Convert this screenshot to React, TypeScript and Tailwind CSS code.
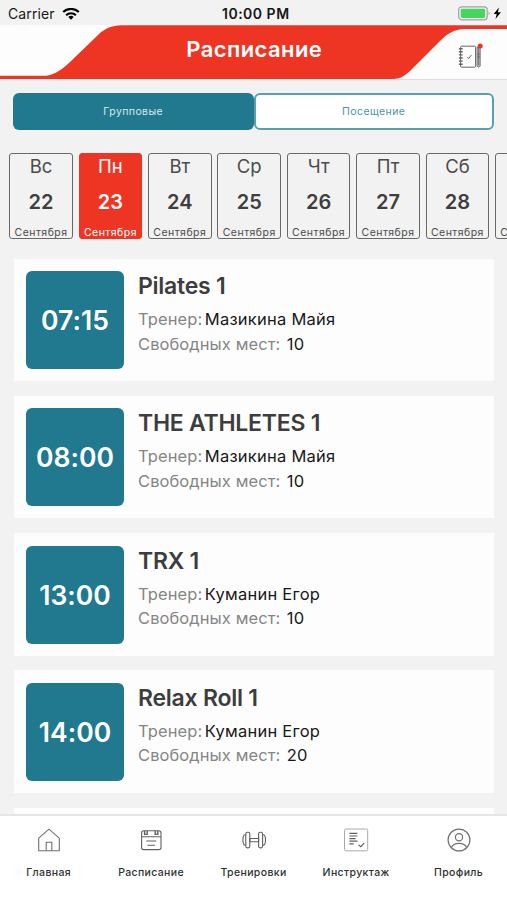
import React from 'react';

const days = [
  { day: 'Вс', date: 22 },
  { day: 'Пн', date: 23, active: true },
  { day: 'Вт', date: 24 },
  { day: 'Ср', date: 25 },
  { day: 'Чт', date: 26 },
  { day: 'Пт', date: 27 },
  { day: 'Сб', date: 28 },
  { day: '', date: 29 },
];

const classes = [
  { time: '07:15', name: 'Pilates 1', trainer: 'Мазикина Майя', places: 10 },
  { time: '08:00', name: 'THE ATHLETES 1', trainer: 'Мазикина Майя', places: 10 },
  { time: '13:00', name: 'TRX 1', trainer: 'Куманин Егор', places: 10 },
  { time: '14:00', name: 'Relax Roll 1', trainer: 'Куманин Егор', places: 20 },
];

function StatusBar() {
  return (
    <div className="relative flex h-[25px] shrink-0 items-center justify-between pt-[3px] pr-[5px] pl-[8px] text-[#171717]">
      <div className="flex items-center gap-[7px]">
        <span className="text-[14px] leading-[20px] tracking-[0.1px]">Carrier</span>
        <svg width="18" height="13" viewBox="0 0 18 13" fill="none" stroke="#000" strokeWidth="2.2">
          <path d="M1.2 4C5.6-.1 12.4-.1 16.8 4" />
          <path d="M4.1 7.2c2.8-2.6 7-2.6 9.8 0" />
          <path d="M9 11.8 6.3 9.1a3.9 3.9 0 0 1 5.4 0Z" fill="#000" stroke="none" />
        </svg>
      </div>
      <span className="absolute left-[222px] text-[14px] leading-[20px] font-semibold tracking-[0.5px]">10:00 PM</span>
      <svg width="44" height="16" viewBox="0 0 44 16">
        <rect x="0.7" y="0.8" width="28.5" height="13" rx="3" fill="#f4f4f4" stroke="#a0a0a0" strokeWidth="1.2" />
        <rect x="2.7" y="2.7" width="24.5" height="9.2" rx="1.3" fill="#45d75d" />
        <path d="M30.6 5.4c1.3.8 1.3 3 0 3.8Z" fill="#999" />
        <path d="M40.9 1.6 35.7 8h3l-1.2 4.9 5.4-6.7h-3Z" fill="#000" />
      </svg>
    </div>
  );
}

function JournalIcon() {
  return (
    <svg width="26" height="27" viewBox="0 0 26 27" fill="none" stroke="#666" strokeWidth="1">
      <rect x="3.6" y="4.2" width="15" height="21" rx="1" />
      <path d="M1.9 6.7h3.8M1.9 9.8h3.8M1.9 12.9h3.8M1.9 16h3.8M1.9 19.1h3.8M1.9 22.2h3.8" strokeWidth="1.4" />
      <path d="m10.4 15.1 1.2 1.5 2.8-3.6" />
      <path d="M20 5h3.2v19.2l-1.6 1-1.6-1ZM20 12h3.2M20 15h3.2M21.6 5v18" fill="#bbb" strokeWidth="0.8" />
      <circle cx="23.2" cy="4" r="2.5" fill="#ee3524" stroke="none" />
    </svg>
  );
}

function Header() {
  return (
    <header className="relative flex h-[55px] shrink-0 items-center justify-center">
      <svg className="absolute inset-0" width="507" height="55" viewBox="0 0 507 55">
        <rect width="507" height="54" fill="#fdfdfd" />
        <path
          d="M0 50.7H46C54 50 63 44 70 37L98 10C104 4 112 .3 121 .3H507V4H465C454 4 447 9 439 17L412 44C406 50 401 54 393 54H0Z"
          fill="#ee3524"
        />
        <path d="M393 54.5h114" stroke="#dedede" />
      </svg>
      <h1 className="relative -mt-[8px] pl-[1.5px] text-[22px] leading-[28px] font-semibold tracking-[0.4px] text-white">Расписание</h1>
      <div className="absolute top-[17px] left-[457px]">
        <JournalIcon />
      </div>
    </header>
  );
}

function DayCard({ day, date, active }: { day: string; date: number; active?: boolean }) {
  return (
    <div
      className={
        active
          ? 'flex h-[86px] w-[63.5px] shrink-0 flex-col items-center rounded-[3px] border border-[#ee3524] bg-[#ee3524] text-white'
          : 'flex h-[86px] w-[63.5px] shrink-0 flex-col items-center rounded-[3px] border border-[#686868] text-[#4b4b4b]'
      }
    >
      <span className="h-[24px] shrink-0 text-[18.5px] leading-[24px]">{day}</span>
      <span className={active ? 'mt-[12px] h-[24px] shrink-0 text-[20px] leading-[24px] font-semibold text-white' : 'mt-[12px] h-[24px] shrink-0 text-[20px] leading-[24px] font-semibold text-[#3e3e3e]'}>{day && date}</span>
      <span className="mt-[12px] h-[12px] shrink-0 text-[10.5px] leading-[14px] tracking-[0.48px]">Сентября</span>
    </div>
  );
}

function ClassCard({ time, name, trainer, places }: { time: string; name: string; trainer: string; places: number }) {
  return (
    <article className="flex h-[122.5px] shrink-0 bg-[#fdfdfd] pt-[12.5px] pl-[12px]">
      <div className="flex size-[98px] items-center justify-center rounded-[6px] bg-[#20798f] pt-[2px] text-[26.5px] font-semibold tracking-[0.05px] text-white">{time}</div>
      <div className="ml-[14px] whitespace-nowrap">
        <h2 className="text-[23px] leading-[30px] font-semibold tracking-[-0.25px] text-[#3d3d3d]">{name}</h2>
        <p className="mt-[6px] text-[16.5px] leading-[24.5px] tracking-[0.08px] text-[#858585]">
          Тренер:<span className="ml-[2.5px] tracking-[0.25px] text-[#181818]">{trainer}</span>
        </p>
        <p className="text-[16.5px] leading-[24.5px] tracking-[0.08px] text-[#858585]">
          Свободных мест:<span className="ml-[6.5px] tracking-[0.25px] text-[#181818]">{places}</span>
        </p>
      </div>
    </article>
  );
}

function HomeIcon() {
  return (
    <svg width="24" height="24" viewBox="0 0 24 24" fill="none" stroke="#707070" strokeWidth="1.1">
      <path d="M1.7 10.2 12 1.2l10.3 9V22.7H1.7Z" />
      <path d="M9.2 22.7v-8.5h5.6v8.5" />
    </svg>
  );
}

function ScheduleIcon() {
  return (
    <svg width="24" height="24" viewBox="0 0 24 24" fill="none" stroke="#606060" strokeWidth="1.1">
      <rect x="2.6" y="2.8" width="19.4" height="18.8" rx="2.2" />
      <path d="M2.6 8.7H22M7.3 13h10M8.5 17.2h7.6" />
      <path d="M5.6 3v3.4h2.6V3M16.2 3v3.4h2.6V3" strokeWidth="1.4" />
    </svg>
  );
}

function DumbbellIcon() {
  return (
    <svg width="26" height="24" viewBox="0 0 26 24" fill="none" stroke="#606060" strokeWidth="1.1">
      <rect x="4.8" y="4.3" width="4" height="15.6" rx="1.6" />
      <rect x="17.6" y="4.3" width="4" height="15.6" rx="1.6" />
      <path d="M4.8 6.8h-.7Q1.9 7 1.9 12t2.2 5.3h.7M21.6 6.8h.7q2.2.2 2.2 5.2t-2.2 5.3h-.7M8.8 10.5h8.8v3.2H8.8Z" />
    </svg>
  );
}

function BriefingIcon() {
  return (
    <svg width="26" height="24" viewBox="0 0 26 24" fill="none" stroke="#606060" strokeWidth="1.2">
      <rect x="1.5" y="1" width="23.2" height="21.8" rx="1.4" stroke="#aaa" strokeWidth="1" />
      <path d="M6.4 5.4h8M6.4 8h8M6.4 10.6h6.2M6.4 13.2h8M6.4 15.8h4.3M15.5 16.9l2.3 1.8 3.3-3.6" />
    </svg>
  );
}

function ProfileIcon() {
  return (
    <svg width="24" height="24" viewBox="0 0 24 24" fill="none" stroke="#707070" strokeWidth="1.2">
      <circle cx="12" cy="12" r="10.9" />
      <circle cx="12" cy="9.3" r="3.6" />
      <path d="M4.3 19.7c2.3-5.8 13.1-5.8 15.4 0" />
    </svg>
  );
}

const tabs = [
  { label: 'Главная', icon: HomeIcon },
  { label: 'Расписание', icon: ScheduleIcon },
  { label: 'Тренировки', icon: DumbbellIcon },
  { label: 'Инструктаж', icon: BriefingIcon },
  { label: 'Профиль', icon: ProfileIcon },
];

export default function App() {
  return (
    <div className="flex h-[900px] w-[507px] flex-col overflow-hidden bg-[#f2f2f2] font-['Inter',sans-serif]">
      <StatusBar />
      <Header />
      <div className="mx-[13px] mt-[12.5px] flex h-[37px] shrink-0 text-[10.5px] tracking-[0.42px]">
        <button className="w-[241px] rounded-[6px] bg-[#20798f] pt-[1.5px] text-[#d6eaee]">Групповые</button>
        <button className="w-[241px] rounded-[6px] border-2 border-[#5b9fac] bg-white pt-[1.5px] text-[#4996a6]">Посещение</button>
      </div>
      <div className="mt-[23.5px] flex shrink-0 gap-[5.9px] overflow-hidden pl-[9.3px]">
        {days.map((d) => (
          <DayCard key={d.date} {...d} />
        ))}
      </div>
      <main className="mt-[19.5px] flex min-h-0 flex-1 flex-col gap-[14.8px] overflow-hidden pr-[13px] pl-[14px]">
        {classes.map((c) => (
          <ClassCard key={c.time} {...c} />
        ))}
        <div className="h-[122.5px] shrink-0 bg-[#fdfdfd]" />
      </main>
      <nav className="flex h-[86px] shrink-0 border-t-2 border-[#e6e6e6] bg-white">
        <div className="-ml-[2.7px] flex">
          {tabs.map(({ label, icon: Icon }) => (
            <div key={label} className="flex w-[102.5px] shrink-0 flex-col items-center pt-[12px]">
              <Icon />
              <span className="mt-[13px] text-[10.5px] leading-[16px] font-medium tracking-[0.36px] text-[#303030]">{label}</span>
            </div>
          ))}
        </div>
      </nav>
    </div>
  );
}
